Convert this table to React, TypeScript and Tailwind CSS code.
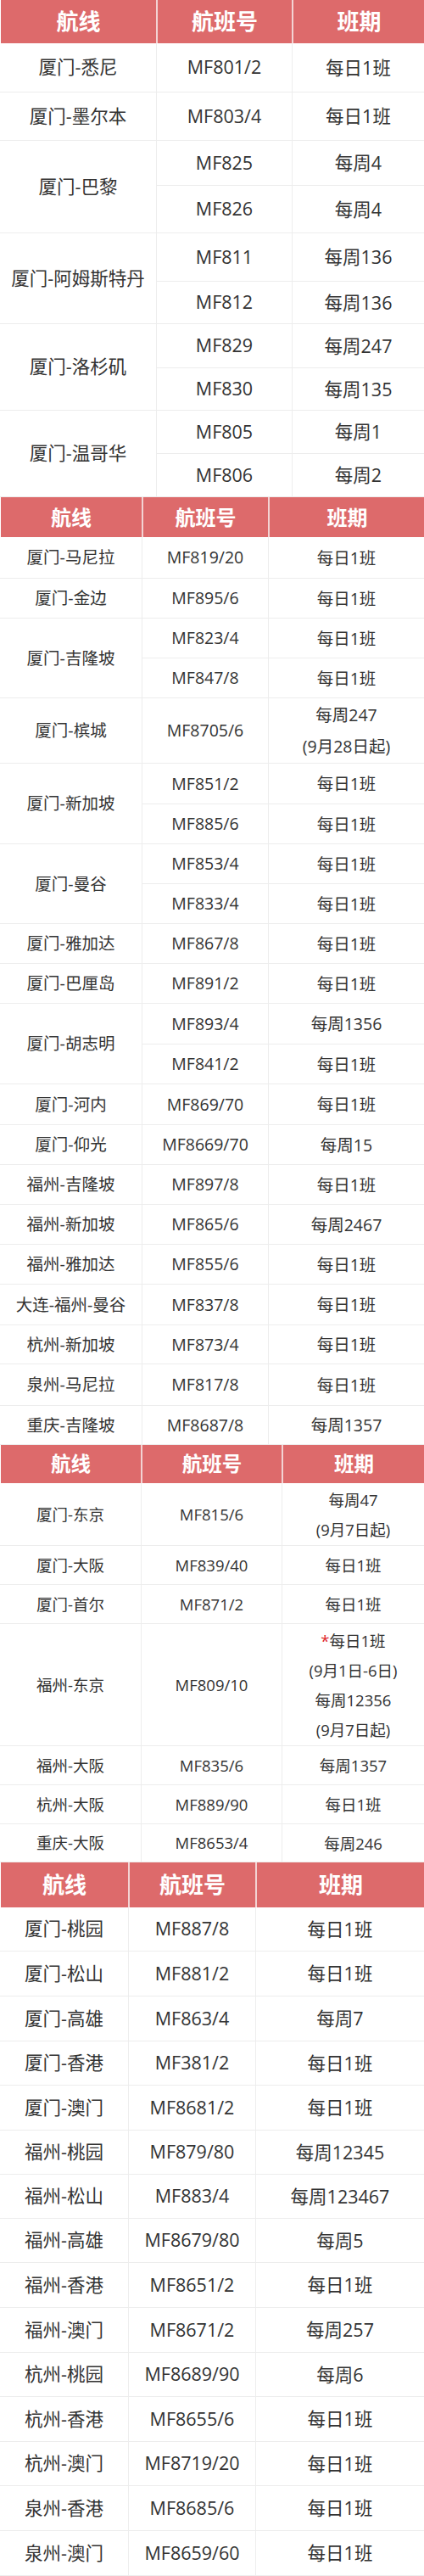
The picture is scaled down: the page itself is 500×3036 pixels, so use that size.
import React from "react";

type Sub = { f: string; s: React.ReactNode; h: string };
type Group = { r: string; subs: Sub[] };
type TableCfg = {
  cols: [string, string, string];
  headH: string;
  headText: string;
  bodyText: string;
  lead: string;
  groups: Group[];
};

const D = "每日1班";

const t1: TableCfg = {
  cols: ["w-[185px]", "w-[160px]", "w-[155px]"],
  headH: "h-[51px]",
  headText: "text-[26px]",
  bodyText: "text-[21.5px]",
  lead: "leading-[36px]",
  groups: [
    { r: "厦门-悉尼", subs: [{ f: "MF801/2", s: D, h: "h-[58px]" }] },
    { r: "厦门-墨尔本", subs: [{ f: "MF803/4", s: D, h: "h-[57px]" }] },
    {
      r: "厦门-巴黎",
      subs: [
        { f: "MF825", s: "每周4", h: "h-[53px]" },
        { f: "MF826", s: "每周4", h: "h-[56px]" },
      ],
    },
    {
      r: "厦门-阿姆斯特丹",
      subs: [
        { f: "MF811", s: "每周136", h: "h-[57px]" },
        { f: "MF812", s: "每周136", h: "h-[50px]" },
      ],
    },
    {
      r: "厦门-洛杉矶",
      subs: [
        { f: "MF829", s: "每周247", h: "h-[52px]" },
        { f: "MF830", s: "每周135", h: "h-[50px]" },
      ],
    },
    {
      r: "厦门-温哥华",
      subs: [
        { f: "MF805", s: "每周1", h: "h-[51px]" },
        { f: "MF806", s: "每周2", h: "h-[51px]" },
      ],
    },
  ],
};

const t2: TableCfg = {
  cols: ["w-[168px]", "w-[149px]", "w-[183px]"],
  headH: "h-[47px]",
  headText: "text-[24px]",
  bodyText: "text-[19.5px]",
  lead: "leading-[37px]",
  groups: [
    { r: "厦门-马尼拉", subs: [{ f: "MF819/20", s: D, h: "h-[49px]" }] },
    { r: "厦门-金边", subs: [{ f: "MF895/6", s: D, h: "h-[47px]" }] },
    {
      r: "厦门-吉隆坡",
      subs: [
        { f: "MF823/4", s: D, h: "h-[47px]" },
        { f: "MF847/8", s: D, h: "h-[47px]" },
      ],
    },
    {
      r: "厦门-槟城",
      subs: [
        {
          f: "MF8705/6",
          s: (
            <>
              <div>每周247</div>
              <div>(9月28日起)</div>
            </>
          ),
          h: "h-[77px]",
        },
      ],
    },
    {
      r: "厦门-新加坡",
      subs: [
        { f: "MF851/2", s: D, h: "h-[48px]" },
        { f: "MF885/6", s: D, h: "h-[47px]" },
      ],
    },
    {
      r: "厦门-曼谷",
      subs: [
        { f: "MF853/4", s: D, h: "h-[47px]" },
        { f: "MF833/4", s: D, h: "h-[47px]" },
      ],
    },
    { r: "厦门-雅加达", subs: [{ f: "MF867/8", s: D, h: "h-[47px]" }] },
    { r: "厦门-巴厘岛", subs: [{ f: "MF891/2", s: D, h: "h-[47px]" }] },
    {
      r: "厦门-胡志明",
      subs: [
        { f: "MF893/4", s: "每周1356", h: "h-[48px]" },
        { f: "MF841/2", s: D, h: "h-[47px]" },
      ],
    },
    { r: "厦门-河内", subs: [{ f: "MF869/70", s: D, h: "h-[48px]" }] },
    { r: "厦门-仰光", subs: [{ f: "MF8669/70", s: "每周15", h: "h-[47px]" }] },
    { r: "福州-吉隆坡", subs: [{ f: "MF897/8", s: D, h: "h-[47px]" }] },
    { r: "福州-新加坡", subs: [{ f: "MF865/6", s: "每周2467", h: "h-[47px]" }] },
    { r: "福州-雅加达", subs: [{ f: "MF855/6", s: D, h: "h-[47px]" }] },
    { r: "大连-福州-曼谷", subs: [{ f: "MF837/8", s: D, h: "h-[48px]" }] },
    { r: "杭州-新加坡", subs: [{ f: "MF873/4", s: D, h: "h-[46px]" }] },
    { r: "泉州-马尼拉", subs: [{ f: "MF817/8", s: D, h: "h-[49px]" }] },
    { r: "重庆-吉隆坡", subs: [{ f: "MF8687/8", s: "每周1357", h: "h-[46px]" }] },
  ],
};

const t3: TableCfg = {
  cols: ["w-[167px]", "w-[166px]", "w-[167px]"],
  headH: "h-[45px]",
  headText: "text-[23.5px]",
  bodyText: "text-[18.5px]",
  lead: "leading-[35px]",
  groups: [
    {
      r: "厦门-东京",
      subs: [
        {
          f: "MF815/6",
          s: (
            <>
              <div>每周47</div>
              <div>(9月7日起)</div>
            </>
          ),
          h: "h-[74px]",
        },
      ],
    },
    { r: "厦门-大阪", subs: [{ f: "MF839/40", s: D, h: "h-[46px]" }] },
    { r: "厦门-首尔", subs: [{ f: "MF871/2", s: D, h: "h-[46px]" }] },
    {
      r: "福州-东京",
      subs: [
        {
          f: "MF809/10",
          s: (
            <>
              <div>
                <span className="text-[#e0262c]">*</span>每日1班
              </div>
              <div>(9月1日-6日)</div>
              <div>每周12356</div>
              <div>(9月7日起)</div>
            </>
          ),
          h: "h-[144px]",
        },
      ],
    },
    { r: "福州-大阪", subs: [{ f: "MF835/6", s: "每周1357", h: "h-[46px]" }] },
    { r: "杭州-大阪", subs: [{ f: "MF889/90", s: D, h: "h-[46px]" }] },
    { r: "重庆-大阪", subs: [{ f: "MF8653/4", s: "每周246", h: "h-[45px]" }] },
  ],
};

const t4: TableCfg = {
  cols: ["w-[152px]", "w-[150px]", "w-[198px]"],
  headH: "h-[53px]",
  headText: "text-[26px]",
  bodyText: "text-[21.5px]",
  lead: "leading-[36px]",
  groups: [
    { r: "厦门-桃园", subs: [{ f: "MF887/8", s: D, h: "h-[52px]" }] },
    { r: "厦门-松山", subs: [{ f: "MF881/2", s: D, h: "h-[53px]" }] },
    { r: "厦门-高雄", subs: [{ f: "MF863/4", s: "每周7", h: "h-[53px]" }] },
    { r: "厦门-香港", subs: [{ f: "MF381/2", s: D, h: "h-[52px]" }] },
    { r: "厦门-澳门", subs: [{ f: "MF8681/2", s: D, h: "h-[53px]" }] },
    { r: "福州-桃园", subs: [{ f: "MF879/80", s: "每周12345", h: "h-[52px]" }] },
    { r: "福州-松山", subs: [{ f: "MF883/4", s: "每周123467", h: "h-[52px]" }] },
    { r: "福州-高雄", subs: [{ f: "MF8679/80", s: "每周5", h: "h-[52px]" }] },
    { r: "福州-香港", subs: [{ f: "MF8651/2", s: D, h: "h-[53px]" }] },
    { r: "福州-澳门", subs: [{ f: "MF8671/2", s: "每周257", h: "h-[53px]" }] },
    { r: "杭州-桃园", subs: [{ f: "MF8689/90", s: "每周6", h: "h-[52px]" }] },
    { r: "杭州-香港", subs: [{ f: "MF8655/6", s: D, h: "h-[53px]" }] },
    { r: "杭州-澳门", subs: [{ f: "MF8719/20", s: D, h: "h-[52px]" }] },
    { r: "泉州-香港", subs: [{ f: "MF8685/6", s: D, h: "h-[53px]" }] },
    { r: "泉州-澳门", subs: [{ f: "MF8659/60", s: D, h: "h-[53px]" }] },
  ],
};

function Table({ cfg }: { cfg: TableCfg }) {
  const [c1, c2, c3] = cfg.cols;
  return (
    <div className="flex flex-col w-[500px]">
      <div
        className={`flex ${cfg.headH} bg-[#dd6a6b] text-white font-bold ${cfg.headText} border-l border-l-white`}
      >
        <div className={`${c1} shrink-0 flex items-center justify-center border-r-2 border-r-[#f3d3d3]`}>航线</div>
        <div className={`${c2} shrink-0 flex items-center justify-center border-r-2 border-r-[#f3d3d3]`}>航班号</div>
        <div className={`${c3} shrink-0 flex items-center justify-center`}>班期</div>
      </div>
      <div className={`flex flex-col text-[#333333] ${cfg.bodyText}`}>
        {cfg.groups.map((g, i) => (
          <div key={i} className="flex">
            <div
              className={`${c1} shrink-0 flex items-center justify-center border-b border-r border-[#ededed] whitespace-nowrap`}
            >
              {g.r}
            </div>
            <div className="flex flex-col">
              {g.subs.map((s, j) => (
                <div key={j} className={`flex ${s.h}`}>
                  <div
                    className={`${c2} shrink-0 flex items-center justify-center border-b border-r border-[#ededed]`}
                  >
                    {s.f}
                  </div>
                  <div
                    className={`${c3} shrink-0 flex flex-col items-center justify-center border-b border-[#ededed] text-center ${cfg.lead}`}
                  >
                    {s.s}
                  </div>
                </div>
              ))}
            </div>
          </div>
        ))}
      </div>
    </div>
  );
}

export default function App() {
  return (
    <div className="w-[500px] bg-white font-['Open_Sans','Noto_Sans_CJK_SC',sans-serif]">
      <Table cfg={t1} />
      <Table cfg={t2} />
      <Table cfg={t3} />
      <Table cfg={t4} />
    </div>
  );
}
